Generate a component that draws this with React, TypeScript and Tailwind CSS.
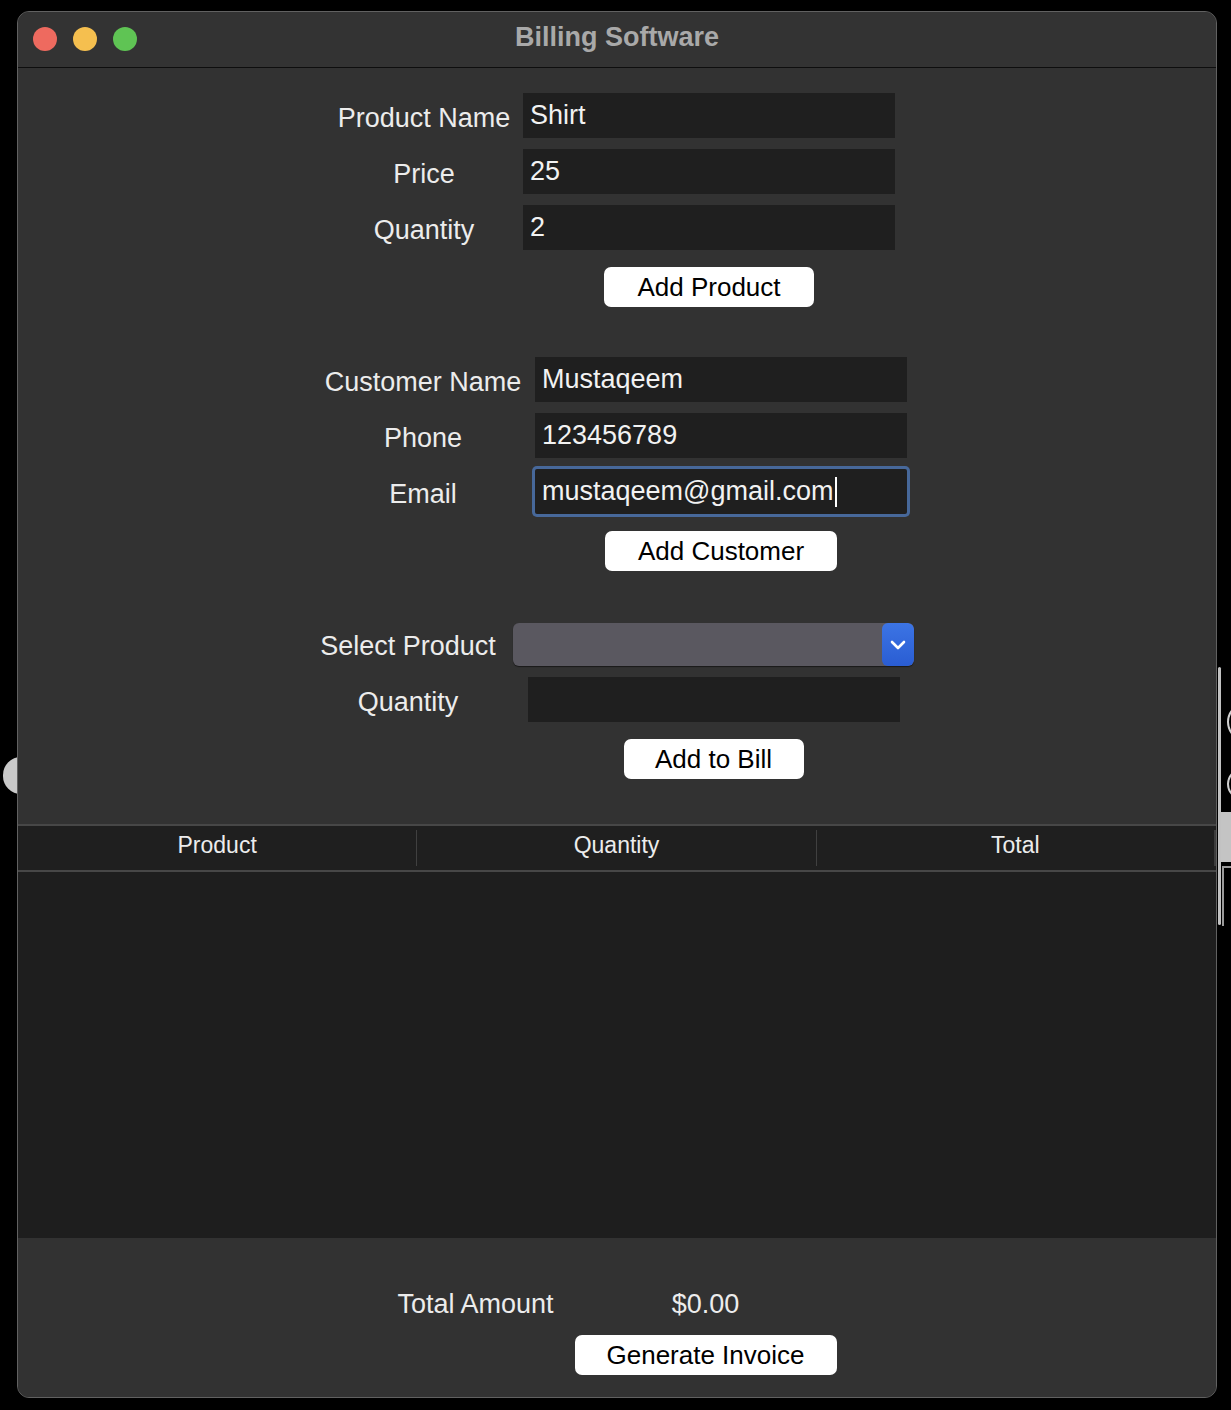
import React from 'react';

const Field = ({ value, focused, caret }: { value?: string; focused?: boolean; caret?: boolean }) => (
  <div
    className={`h-[45px] w-[372px] bg-[#1f1f1f] flex items-center pl-[7px] text-[27px] text-[#f2f2f2] leading-none ${
      focused ? 'rounded-[2px] shadow-[0_0_0_3px_#47689a]' : ''
    }`}
  >
    <span>{value}</span>
    {caret && <span className="ml-[1px] w-[2px] h-[30px] bg-white" />}
  </div>
);

const Label = ({ children }: { children: React.ReactNode }) => (
  <div className="h-[45px] flex items-center justify-center pt-[5px] text-[27px] text-[#ececec] leading-none whitespace-nowrap">
    {children}
  </div>
);

const Btn = ({ children, w }: { children: React.ReactNode; w: string }) => (
  <button className={`${w} h-[40px] bg-white rounded-[7px] text-black text-[26px] leading-none flex items-center justify-center`}>
    {children}
  </button>
);

export default function App() {
  return (
    <div className="relative w-[1231px] h-[1410px] bg-black overflow-hidden font-['Liberation_Sans',Arial,sans-serif]">
      {/* bits of other windows peeking out behind */}
      <div className="absolute left-[3px] top-[757px] w-[36px] h-[37px] rounded-full bg-[#c9c9c9]" />
      <div className="absolute left-[1218px] top-[667px] w-[3px] h-[258px] rounded-full bg-[#c2c2c2]" />
      <div className="absolute left-[1227px] top-[702px] w-[40px] h-[40px] rounded-full border-2 border-[#d0d0d0]" />
      <div className="absolute left-[1227px] top-[768px] w-[40px] h-[32px] rounded-full border-2 border-[#d0d0d0]" />
      <div className="absolute left-[1221px] top-[812px] w-[10px] h-[50px] bg-[#c4c4c4]" />
      <div className="absolute left-[1222px] top-[866px] w-[9px] h-[60px] border-l-2 border-t-2 border-[#9a9a9a]" />

      <div className="relative ml-[17px] mt-[11px] w-[1200px] h-[1387px] rounded-[12px] border border-[#616161] bg-[#323232] overflow-hidden flex flex-col">
        {/* title bar */}
        <div className="h-[56px] shrink-0 bg-[#333333] border-b border-[#0e0e0e] relative flex items-center justify-center">
          <div className="absolute left-[15px] top-[15px] flex gap-[16px]">
            <span className="w-[24px] h-[24px] rounded-full bg-[#ee6a5f]" />
            <span className="w-[24px] h-[24px] rounded-full bg-[#f5bf4f]" />
            <span className="w-[24px] h-[24px] rounded-full bg-[#5fc454]" />
          </div>
          <span className="text-[27px] font-bold text-[#a9a9a9] leading-none -mt-[4px]">Billing Software</span>
        </div>

        {/* forms */}
        <div className="flex flex-col items-center pt-[25px] pr-[1px]">
          <div className="grid grid-cols-[172px_372px] gap-x-[13px] gap-y-[11px]">
            <Label>Product Name</Label>
            <Field value="Shirt" />
            <Label>Price</Label>
            <Field value="25" />
            <Label>Quantity</Label>
            <Field value="2" />
            <div />
            <div className="flex justify-center mt-[6px]">
              <Btn w="w-[210px]">Add Product</Btn>
            </div>
          </div>

          <div className="grid grid-cols-[194px_372px] gap-x-[15px] gap-y-[11px] mt-[50px]">
            <Label>Customer Name</Label>
            <Field value="Mustaqeem" />
            <Label>Phone</Label>
            <Field value="123456789" />
            <Label>Email</Label>
            <Field value="mustaqeem@gmail.com" focused caret />
            <div />
            <div className="flex justify-center mt-[6px]">
              <Btn w="w-[232px]">Add Customer</Btn>
            </div>
          </div>

          <div className="grid grid-cols-[178px_401px] gap-x-[16px] gap-y-[11px] mt-[52px]">
            <div className="h-[43px] flex items-center justify-center pt-[4px] text-[27px] text-[#ececec] leading-none whitespace-nowrap">
              Select Product
            </div>
            <div className="h-[43px] rounded-[6px] bg-[#5a5860] shadow-[0_1px_1px_rgba(0,0,0,0.5)] flex justify-end overflow-hidden">
              <div className="w-[32px] h-full rounded-[6px] bg-gradient-to-b from-[#3c74e4] to-[#2a5dd3] flex items-center justify-center">
                <svg width="18" height="12" viewBox="0 0 18 12" fill="none">
                  <path d="M3 3 L9 9 L15 3" stroke="white" strokeWidth="2.6" strokeLinecap="round" strokeLinejoin="round" />
                </svg>
              </div>
            </div>
            <Label>Quantity</Label>
            <div className="flex justify-center">
              <Field />
            </div>
            <div />
            <div className="flex justify-center mt-[6px]">
              <Btn w="w-[180px]">Add to Bill</Btn>
            </div>
          </div>
        </div>

        {/* bill table */}
        <div className="mt-[45px] border-t-2 border-b-2 border-[#474747] bg-[#1f1f1f] h-[48px] shrink-0 grid grid-cols-3 items-center text-[23px] text-[#ececec] leading-none">
          <div className="h-[36px] border-r border-[#404040] flex items-center justify-center pb-[5px]">Product</div>
          <div className="h-[36px] border-r border-[#404040] flex items-center justify-center pb-[5px]">Quantity</div>
          <div className="h-[36px] border-r-2 border-[#3d3d3d] flex items-center justify-center pb-[5px]">Total</div>
        </div>
        <div className="flex-1 bg-[#1e1e1e]" />

        {/* footer */}
        <div className="h-[159px] shrink-0 bg-[#323232] flex flex-col items-center pt-[50px]">
          <div className="grid grid-cols-[161px_262px] gap-x-[16px] gap-y-[15px]">
            <div className="h-[32px] flex items-center text-[27px] text-[#ececec] leading-none whitespace-nowrap">Total Amount</div>
            <div className="h-[32px] flex items-center justify-center text-[27px] text-[#ececec] leading-none">$0.00</div>
            <div />
            <Btn w="w-[262px]">Generate Invoice</Btn>
          </div>
        </div>
      </div>
    </div>
  );
}
